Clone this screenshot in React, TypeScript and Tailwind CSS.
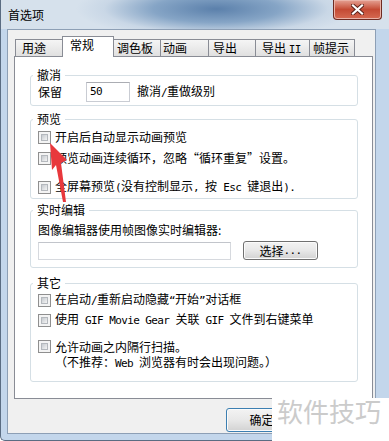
import type { ReactNode } from 'react'

const En = ({ children }: { children: ReactNode }) => (
  <span className="font-['DejaVu_Sans_Mono',monospace] text-[11px] tracking-[-0.6px]">{children}</span>
)

function CheckBox() {
  return (
    <span className="flex w-[13px] h-[13px] shrink-0 border border-[#8f8f8f] bg-[#f4f4f4] p-[2px]">
      <span className="flex-1 border border-[#b4b8bd] bg-gradient-to-br from-[#c6cacf] to-[#f4f4f4]" />
    </span>
  )
}

function CheckRow({ children, className = '' }: { children: ReactNode; className?: string }) {
  return (
    <div className={`flex items-center h-[20px] ${className}`}>
      <CheckBox />
      <span className="ml-[4px] leading-[20px] whitespace-nowrap">{children}</span>
    </div>
  )
}

function Group({ title, className = '', children }: { title: string; className?: string; children: ReactNode }) {
  return (
    <fieldset className={`border border-[#d5dfe5] rounded-[3px] px-[7px] ${className}`}>
      <legend className="ml-[-5px] px-[4px] leading-[14px]">{title}</legend>
      {children}
    </fieldset>
  )
}

function Button({ children, className = '' }: { children: ReactNode; className?: string }) {
  return (
    <div
      className={`flex items-center justify-center rounded-[3px] border bg-gradient-to-b from-[#f3f3f3] via-[#e8e8e8] to-[#d2d2d2] shadow-[inset_0_0_0_1px_#fbfbfb] ${className}`}
    >
      {children}
    </div>
  )
}

const tabs = [
  { label: '用途', w: 'w-[48px]', pl: 'pl-[6px]' },
  { label: '常规', w: 'w-[52px]', pl: 'pl-[7px]', active: true },
  { label: '调色板', w: 'w-[48px]', pl: 'pl-[3px]' },
  { label: '动画', w: 'w-[49px]', pl: 'pl-[2px]' },
  { label: '导出', w: 'w-[48px]', pl: 'pl-[4px]' },
  { label: '导出 II', w: 'w-[55px]', pl: 'pl-[6px]', en: true },
  { label: '帧提示', w: 'w-[46px]', pl: 'pl-[3px]' },
]

export default function App() {
  return (
    <div className="relative w-[389px] h-[441px] overflow-hidden bg-white font-['Noto_Sans_CJK_SC',sans-serif] text-[12px] text-black">
      {/* window */}
      <div className="w-[392px] h-[441px] flex flex-col bg-[#c3d6eb] border-l border-b border-[#5a6c82] rounded-bl-[5px]">
        {/* title bar */}
        <div className="flex items-start h-[29px] pl-[7px] bg-[radial-gradient(ellipse_140px_30px_at_215px_9px,#5b80ab_0%,#86a5c6_45%,#c9d7e6_80%,#d6e1ec_100%)]">
          <span className="mt-[8px] leading-[14px]">首选项</span>
          <div className="ml-auto mr-[10px] w-[49px] h-[20px] flex items-center justify-center rounded-b-[4px] border border-t-0 border-[#6e2b22] bg-gradient-to-b from-[#e4a194] via-[#c44a34] to-[#d66a52] shadow-[inset_0_0_0_1px_#eab3a8]">
            <svg width="13" height="11" viewBox="0 0 13 11">
              <path d="M2 1.5 L11 9.5 M11 1.5 L2 9.5" stroke="#5a2018" strokeWidth="4" strokeLinecap="square" />
              <path d="M2 1.5 L11 9.5 M11 1.5 L2 9.5" stroke="#ffffff" strokeWidth="2.2" strokeLinecap="square" />
            </svg>
          </div>
        </div>

        {/* client area */}
        <div className="ml-[6px] w-[369px] border border-[#8d9fb5] bg-[#f0f0f0] pt-[6px] pl-[6px] pb-[1px]">
          {/* tabs */}
          <div className="flex items-end h-[20px] pl-[1px]">
            {tabs.map((t, i) =>
              t.active ? (
                <div
                  key={i}
                  className={`relative z-10 -ml-px -mb-px h-[21px] ${t.w} ${t.pl} border-l border-t border-r border-[#898c95] bg-white leading-[16px]`}
                >
                  {t.label}
                </div>
              ) : (
                <div
                  key={i}
                  className={`${i === 0 ? '' : '-ml-px'} h-[17px] ${t.w} ${t.pl} border-l border-t border-r border-[#898c95] bg-gradient-to-b from-[#f5f5f5] to-[#e0e0e0] leading-[16px] whitespace-nowrap`}
                >
                  {t.en ? (
                    <>
                      导出 <En>II</En>
                    </>
                  ) : (
                    t.label
                  )}
                </div>
              )
            )}
          </div>

          {/* panel */}
          <div className="w-[359px] h-[343px] border border-[#898c95] bg-white pl-[15px] pr-[14px] pt-[11px]">
            <Group title="撤消" className="pb-[3px]">
              <div className="flex items-center h-[20px]">
                <span className="w-[48px]">保留</span>
                <div className="flex items-center w-[44px] h-[20px] border border-[#c9ccd3] border-t-[#abadb3] pl-[3px]">
                  <En>50</En>
                </div>
                <span className="ml-[7px]">
                  撤消<En>/</En>重做级别
                </span>
              </div>
            </Group>

            <Group title="预览" className="mt-[6px] pb-[1px]">
              <CheckRow className="mt-[1px]">开启后自动显示动画预览</CheckRow>
              <CheckRow className="mt-[1px]">预览动画连续循环，忽略“循环重复”设置。</CheckRow>
              <CheckRow className="mt-[9px]">
                全屏幕预览<En>(</En>没有控制显示<En>, </En>按<En> Esc </En>键退出<En>).</En>
              </CheckRow>
            </Group>

            <Group title="实时编辑" className="mt-[4px] pb-[7px]">
              <div className="mt-[5px] h-[16px] leading-[16px]">图像编辑器使用帧图像实时编辑器:</div>
              <div className="mt-[3px] flex items-start">
                <div className="mt-[1px] w-[193px] h-[18px] border border-[#d6d9de] border-t-[#c2c5cb] bg-white" />
                <Button className="ml-[12px] w-[75px] h-[19px] border-[#707070] leading-[16px]">
                  选择<En>...</En>
                </Button>
              </div>
            </Group>

            <Group title="其它" className="mt-[8px] pb-[12px]">
              <CheckRow>
                在启动<En>/</En>重新启动隐藏<En>“</En>开始<En>”</En>对话框
              </CheckRow>
              <CheckRow>
                使用<En> GIF Movie Gear </En>关联<En> GIF </En>文件到右键菜单
              </CheckRow>
              <div className="mt-[9px] flex items-start">
                <span className="mt-[1px]">
                  <CheckBox />
                </span>
                <div className="ml-[4px] leading-[15px] whitespace-nowrap">
                  <div className="h-[15px]">允许动画之内隔行扫描。</div>
                  <div className="h-[15px]">
                    （不推荐：<En>Web </En>浏览器有时会出现问题。）
                  </div>
                </div>
              </div>
            </Group>
          </div>

          {/* buttons */}
          <div className="mt-[9px] flex pl-[212px]">
            <Button className="w-[75px] h-[24px] pr-[4px] border-[#3c7fb1] shadow-[inset_0_0_0_1px_#c9e5f7]">确定</Button>
          </div>
        </div>
      </div>

      {/* red arrow annotation */}
      <svg className="absolute left-0 top-0 pointer-events-none" width="389" height="441" viewBox="0 0 389 441">
        <polygon points="50,143 67,160 61,163 66,202 63,202 56,165 52,170" fill="#e8383c" />
      </svg>

      {/* watermark */}
      <div className="absolute right-0 bottom-0 w-[117px] h-[43px] bg-white pl-[5px] text-[26px] leading-[26px] text-[#cbcbcb]">
        软件技巧
      </div>
    </div>
  )
}
